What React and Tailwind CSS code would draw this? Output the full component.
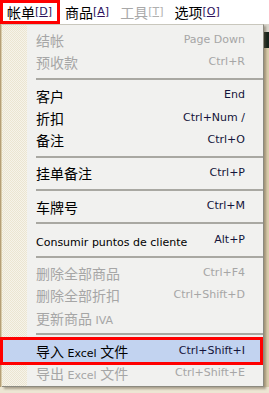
const cjk = "font-['Noto_Sans_CJK_SC',sans-serif] text-[14px]";
const lat = "font-['DejaVu_Sans',sans-serif] text-[11px]";

const items = [
  { label: "结帐", key: "Page Down", off: true },
  { label: "预收款", key: "Ctrl+R", off: true },
  "sep",
  { label: "客户", key: "End" },
  { label: "折扣", key: "Ctrl+Num /" },
  { label: "备注", key: "Ctrl+O" },
  "sep",
  { label: "挂单备注", key: "Ctrl+P" },
  "sep",
  { label: "车牌号", key: "Ctrl+M" },
  "sep",
  { label: "Consumir puntos de cliente", key: "Alt+P" },
  "sep",
  { label: "删除全部商品", key: "Ctrl+F4", off: true },
  { label: "删除全部折扣", key: "Ctrl+Shift+D", off: true },
  { label: "更新商品 IVA", key: "", off: true },
  "sep",
  { label: "导入 Excel 文件", key: "Ctrl+Shift+I", active: true },
  { label: "导出 Excel 文件", key: "Ctrl+Shift+E", off: true },
];

function Label({ text }) {
  const parts = text.split(/([\u4e00-\u9fff]+)/).filter(Boolean);
  return (
    <span className="whitespace-pre">
      {parts.map((p, i) =>
        /[\u4e00-\u9fff]/.test(p) ? (
          <span key={i} className={cjk}>{p}</span>
        ) : (
          <span key={i} className={lat}>{p}</span>
        )
      )}
    </span>
  );
}

function TopItem({ name, hot, off, boxed }) {
  return (
    <div
      className={
        boxed
          ? "flex items-center h-[24px] w-[60px] pl-[4px] border-[3px] border-[#ff0000]"
          : "flex items-center h-[24px] pl-[5px] pr-[6px]"
      }
    >
      <span className={off ? "text-[#a8a8a8] " + cjk : "text-black " + cjk}>{name}</span>
      <span className={off ? "text-[#b0b0b0] " + lat : "text-[#2a0f5c] " + lat}>
        [<span className="underline">{hot}</span>]
      </span>
    </div>
  );
}

export default function App() {
  return (
    <div className="relative w-[269px] h-[393px] bg-[#ece6d3] overflow-hidden">
      <div className="flex h-[24px] bg-white">
        <TopItem name="帐单" hot="D" boxed />
        <TopItem name="商品" hot="A" />
        <TopItem name="工具" hot="T" off />
        <TopItem name="选项" hot="O" />
      </div>

      <div className="flex">
        <div className="w-[2px] h-[363px] bg-[#d9ccaa] border-l border-[#b59f76]" />
        <div className="relative w-[262px] h-[363px] bg-[#f1f1ef] border-t border-[#c9c7bd] border-r border-b border-r-[#8c8a80] border-b-[#8c8a80] shadow-[2px_2px_2px_rgba(90,80,60,0.45)] pt-[4px]">
          <div className="absolute left-0 top-0 bottom-0 w-[25px] bg-[repeating-conic-gradient(#ebe5d1_0%_25%,#f6f3ea_0%_50%)] bg-[length:2px_2px]" />
          <div className="relative">
            {items.map((it, i) =>
              it === "sep" ? (
                <div key={i} className="h-[11px] flex items-center pl-[34px]">
                  <div className="w-full h-[2px] bg-[#a9a8a2]" />
                </div>
              ) : (
                <div
                  key={i}
                  className={
                    it.active
                      ? "flex items-center justify-between h-[22.25px] pl-[34px] pr-[18px] bg-[#c2d3f0] text-black"
                      : it.off
                      ? "flex items-center justify-between h-[22.25px] pl-[34px] pr-[18px] text-[#a6a6a6]"
                      : "flex items-center justify-between h-[22.25px] pl-[34px] pr-[18px] text-black"
                  }
                >
                  <Label text={it.label} />
                  <span className={it.off ? lat : lat + " text-[#14143a]"}>{it.key}</span>
                </div>
              )
            )}
          </div>
        </div>
        <div className="flex flex-col w-[5px]">
          <div className="h-[8px] bg-[#d8d6cc]" />
          <div className="h-[16px] bg-[#15231a]" />
          <div className="flex-1 bg-[#d9ccab]" />
        </div>
      </div>

      <div className="absolute left-0 top-[337px] w-[263px] h-[28px] border-[3px] border-[#ff0000]" />
    </div>
  );
}
